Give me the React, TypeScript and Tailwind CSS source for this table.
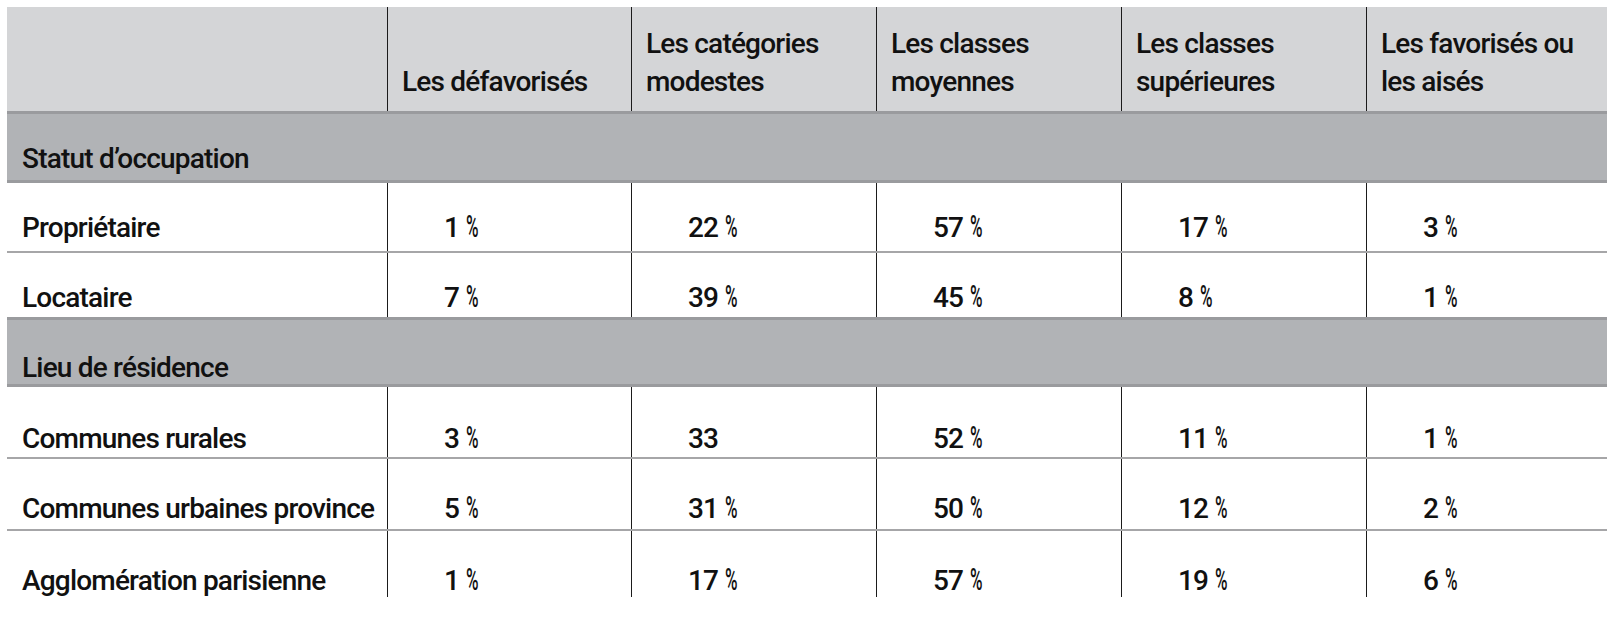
import React from "react";

const cols = ["Les défavorisés", "Les catégories\nmodestes", "Les classes\nmoyennes", "Les classes\nsupérieures", "Les favorisés ou\nles aisés"];

type Row = { label: string; values: string[]; h: string; pb: string; border: string };

const Data = ({ r }: { r: Row }) => (
  <div className={`flex ${r.h} ${r.border}`}>
    <div className={`w-[380px] shrink-0 flex items-end pl-[15px] ${r.pb}`}>{r.label}</div>
    {r.values.map((v, i) => (
      <div key={i} className={`${i === 4 ? "w-[241px]" : i === 0 ? "w-[244px]" : "w-[245px]"} shrink-0 border-l border-[#1b1b1b] flex items-end pl-[56px] ${r.pb}`}>
        <Num v={v} />
      </div>
    ))}
  </div>
);

const Num = ({ v }: { v: string }) => {
  if (v.endsWith("%")) {
    const n = v.replace(" %", "");
    return (
      <span>
        {n}
        <span className="ml-[7px] inline-block text-[31px] leading-[32px] font-medium scale-x-[0.55] origin-left">%</span>
      </span>
    );
  }
  return <span>{v}</span>;
};

const Category = ({ label, h, pb }: { label: string; h: string; pb: string }) => (
  <div className={`flex items-end ${h} bg-[#b1b3b6] border-b-[3px] border-[#9a9b9e] pl-[15px] ${pb}`}>{label}</div>
);

export default function App() {
  const rows1: Row[] = [
    { label: "Propriétaire", values: ["1 %", "22 %", "57 %", "17 %", "3 %"], h: "h-[70px]", pb: "pb-[7px]", border: "border-b-2 border-[#a6a6a8]" },
    { label: "Locataire", values: ["7 %", "39 %", "45 %", "8 %", "1 %"], h: "h-[67px]", pb: "pb-[3px]", border: "border-b-[3px] border-[#9a9b9e]" },
  ];
  const rows2: Row[] = [
    { label: "Communes rurales", values: ["3 %", "33", "52 %", "11 %", "1 %"], h: "h-[72px]", pb: "pb-[2px]", border: "border-b-2 border-[#a6a6a8]" },
    { label: "Communes urbaines province", values: ["5 %", "31 %", "50 %", "12 %", "2 %"], h: "h-[72px]", pb: "pb-[4px]", border: "border-b-2 border-[#a6a6a8]" },
    { label: "Agglomération parisienne", values: ["1 %", "17 %", "57 %", "19 %", "6 %"], h: "h-[66px]", pb: "pb-0", border: "" },
  ];
  return (
    <div
      className="w-[1615px] h-[618px] bg-white pt-[7px] pl-[7px] text-[#111] text-[28px] leading-[32px] font-medium tracking-[-0.8px] overflow-hidden"
      style={{ fontFamily: "Roboto, 'Liberation Sans', sans-serif" }}
    >
      <div className="w-[1600px]">
        <div className="flex h-[107px] bg-[#d4d5d7] border-b-[3px] border-[#9a9b9e]">
          <div className="w-[380px] shrink-0" />
          {cols.map((c, i) => (
            <div
              key={i}
              className={`${i === 4 ? "w-[241px]" : i === 0 ? "w-[244px]" : "w-[245px]"} shrink-0 border-l border-[#1b1b1b] flex items-end pl-[14px] pb-[10px] leading-[38px] whitespace-pre-line`}
            >
              {c}
            </div>
          ))}
        </div>
        <Category label="Statut d’occupation" h="h-[69px]" pb="pb-[5px]" />
        {rows1.map((r) => (
          <Data key={r.label} r={r} />
        ))}
        <Category label="Lieu de résidence" h="h-[67px]" pb="pb-[0px]" />
        {rows2.map((r) => (
          <Data key={r.label} r={r} />
        ))}
      </div>
    </div>
  );
}
